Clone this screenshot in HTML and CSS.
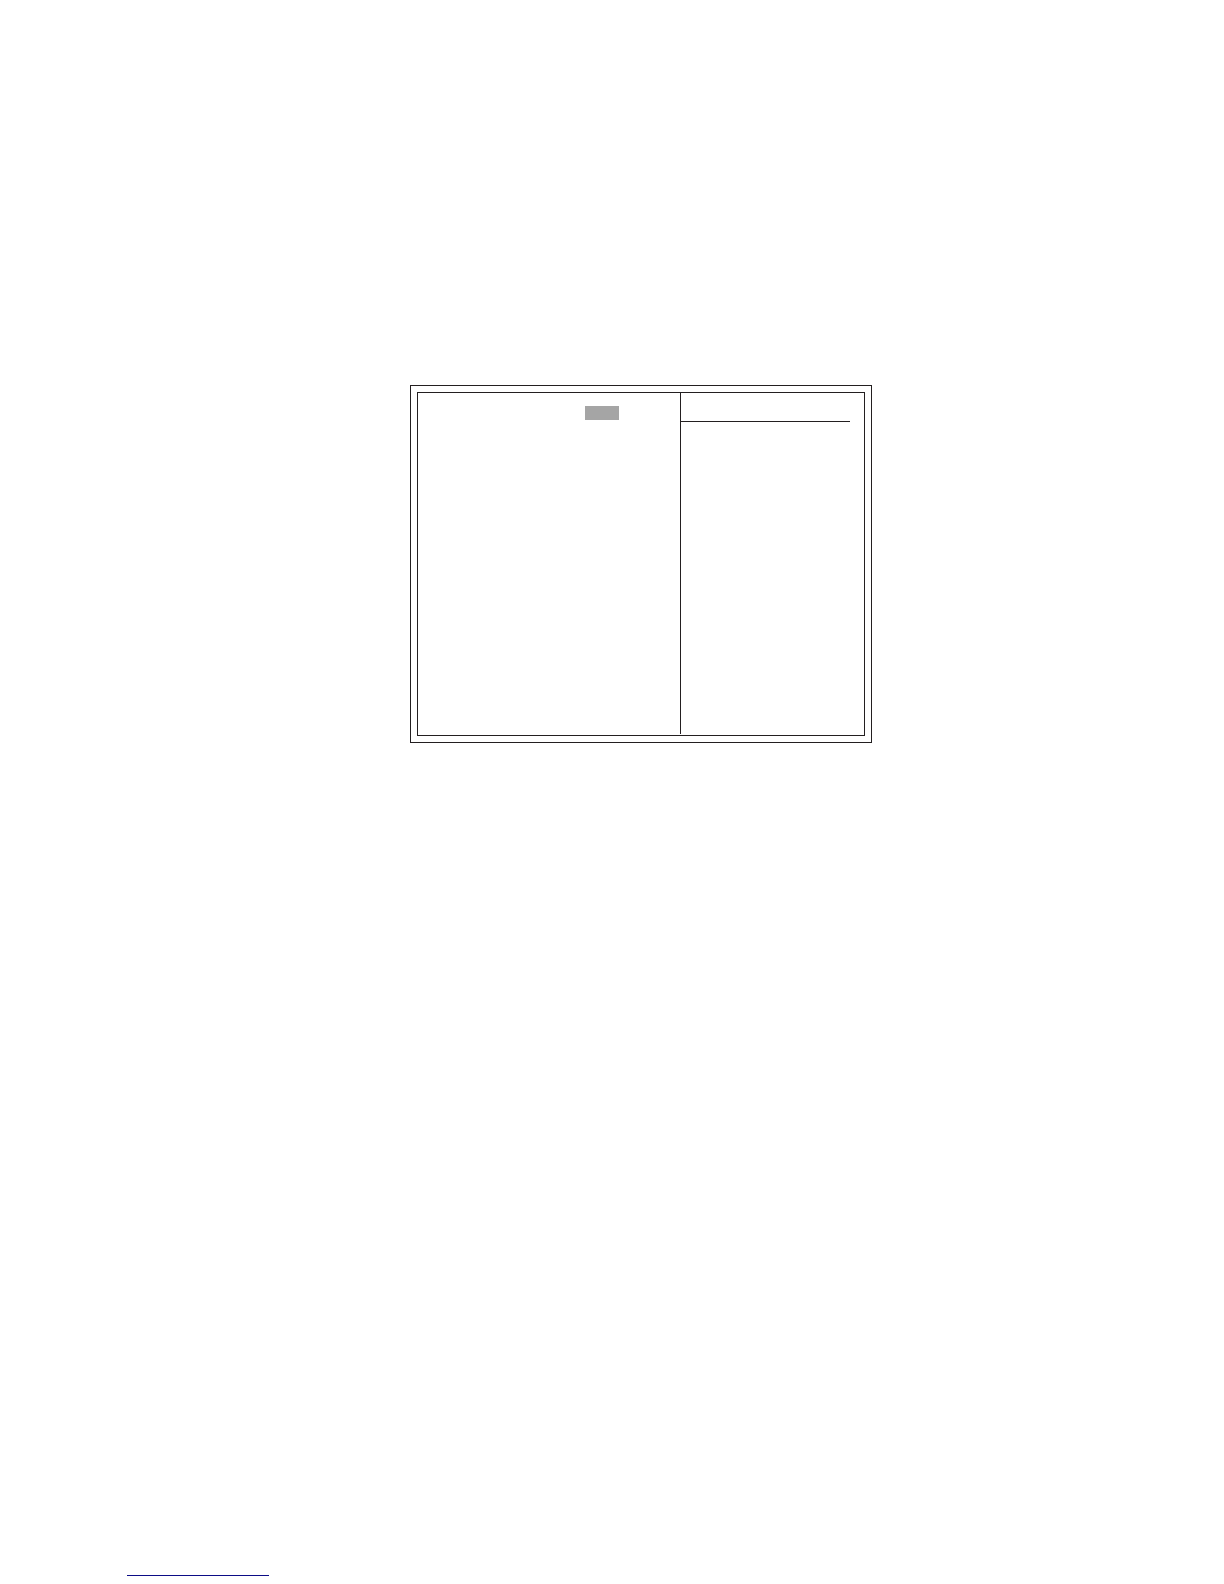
FILE: index.html
```html
<!DOCTYPE html>
<html lang="en">
<head>
    <meta charset="UTF-8">
    <meta name="viewport" content="width=device-width, initial-scale=1.0">
    <title>Setup Screen</title>
    <link rel="stylesheet" href="styles.css">
</head>
<body>
    <main class="page">
        <div class="screen">
            <div class="panels">
                <section class="options">
                    <div class="selected"></div>
                </section>
                <aside class="help">
                    <div class="help-header"></div>
                </aside>
            </div>
        </div>
    </main>
    <footer class="footer">
        <hr class="footer-line">
    </footer>
</body>
</html>
```
FILE: styles.css
```css
* {
    box-sizing: border-box;
}
body {
    display: flex;
    flex-direction: column;
    min-height: 100vh;
    margin: 0;
    background-color: #fff;
    font-family: "Liberation Sans", Arial, sans-serif;
}
.page {
    flex: 1;
    padding: 385px 352px 0 410px;
}
/* double frame */
.screen {
    padding: 6px;
    border: 1px solid #231f20;
}
.panels {
    display: grid;
    grid-template-columns: 262fr 184fr;
    padding-bottom: 1px;
    border: 1px solid #231f20;
}
.options {
    display: flex;
    justify-content: flex-end;
    min-height: 341px;
    padding: 13px 61px 0 0;
}
.selected {
    width: 34px;
    height: 14px;
    background-color: #a5a5a5;
}
.help {
    padding-right: 14px;
    border-left: 1px solid #231f20;
}
.help-header {
    height: 29px;
    border-bottom: 1px solid #231f20;
}
.footer {
    padding: 0 0 8px 127px;
}
.footer-line {
    width: 142px;
    margin: 0;
    border: none;
    border-top: 1px solid #0c0c86;
}
```
